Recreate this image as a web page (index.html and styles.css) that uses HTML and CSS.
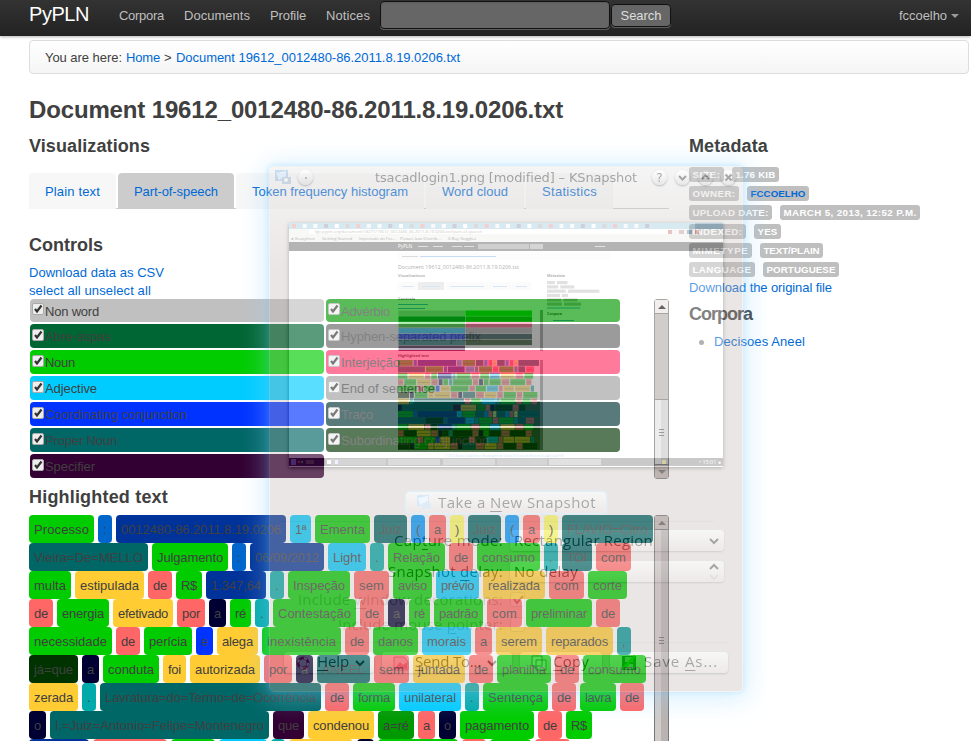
FILE: index.html
```html
<!DOCTYPE html>
<html lang="en">
<head>
<meta charset="utf-8">
<title>PyPLN</title>
<link rel="stylesheet" href="styles.css">
</head>
<body>
<header class="navbar">
  <span class="brand" data-w="60">PyPLN</span>
  <nav class="menu">
    <span data-w="45">Corpora</span><span data-w="66">Documents</span><span data-w="36">Profile</span><span data-w="44">Notices</span>
  </nav>
  <div class="search-input"></div>
  <div class="search-button"><span data-w="41">Search</span></div>
  <div class="user"><span data-w="48">fccoelho</span><i class="caret"></i></div>
</header>
<div class="breadcrumb"><span data-w="77">You are here:</span><a data-w="34">Home</a><span data-w="8">&gt;</span><a data-w="284">Document 19612_0012480-86.2011.8.19.0206.txt</a></div>
<h1><span data-w="534">Document 19612_0012480-86.2011.8.19.0206.txt</span></h1>
<div class="columns">
  <main>
    <h2><span data-w="121">Visualizations</span></h2>
    <div class="tabs">
      <a class="tab t1"><span data-w="55">Plain text</span></a>
      <a class="tab t2 active"><span data-w="84">Part-of-speech</span></a>
      <a class="tab t3"><span data-w="156">Token frequency histogram</span></a>
      <a class="tab t4"><span data-w="66">Word cloud</span></a>
      <a class="tab t5"><span data-w="55">Statistics</span></a>
    </div>
    <h2 class="controls-title"><span data-w="74">Controls</span></h2>
    <div class="link-line lowered"><a data-w="135">Download data as CSV</a></div>
    <div class="link-line lowered"><a data-w="122">select all unselect all</a></div>
    <div class="controls">
      <div class="control-grid" id="controls"></div>
      <div class="scroll first"><i class="up"></i><i class="track"></i><i class="thumb"></i><i class="down"></i></div>
    </div>
    <h2 class="text-title"><span data-w="139">Highlighted text</span></h2>
    <div class="highlight">
      <div id="words" class="words"></div>
      <div class="scroll second"><i class="up"></i><i class="thumb"></i></div>
    </div>
  </main>
  <aside>
    <h2><span data-w="79">Metadata</span></h2>
    <div class="meta" id="meta"></div>
    <div class="link-line"><a data-w="143">Download the original file</a></div>
    <h2 class="corpora"><span data-w="63">Corpora</span></h2>
    <div class="corpus"><i class="bullet"></i><a data-w="91">Decisoes Aneel</a></div>
  </aside>
</div>

<section class="window">
  <div class="titlebar">
    <svg class="appicon" width="16" height="15"><rect width="13" height="11" fill="#6d9cd2"/><path d="M1 3L11 1V6L4 10Z" fill="#bad6f4"/><rect x="7" y="7" width="9" height="7" fill="#7994b8"/><circle cx="11" cy="10" r="2" fill="#d9e7f7"/></svg>
    <i class="round"><b></b></i>
    <span class="title"><span data-w="262">tsacadlogin1.png [modified] – KSnapshot</span></span>
    <i class="round help">?</i>
    <i class="round"><svg width="15" height="15"><path d="M4 6L7.5 9.5L11 6"/></svg></i>
    <i class="round"><svg width="15" height="15"><path d="M4 9L7.5 5.5L11 9"/></svg></i>
    <i class="round"><svg width="15" height="15"><path d="M4.5 4.5L10.5 10.5M10.5 4.5L4.5 10.5"/></svg></i>
  </div>
  <svg class="preview" id="preview" width="434" height="244" viewBox="289 224 434 244"></svg>
  <div class="btn take">
    <svg width="16" height="15"><rect x="1" width="12" height="11" fill="#8fc0ee"/><path d="M2 3L12 1V6L4 10Z" fill="#d5e9fc"/><path d="M6 8h9v6H6z" fill="#a3c8ea"/></svg>
    <span data-w="158">Take a <u>N</u>ew Snapshot</span></div>
  <div class="divider"></div>
  <div class="form">
    <div class="row"><label><span data-w="109">Cap<u>t</u>ure mode:</span></label><div class="combo"><span data-w="139">Rectangular Region</span><svg width="12" height="8"><path d="M2 2L6 6L10 2"/></svg></div></div>
    <div class="row"><label><span data-w="115">Snapshot <u>d</u>elay:</span></label><div class="combo spin"><span data-w="64">No delay</span><svg width="12" height="18"><path d="M2 6L6 2L10 6"/><path class="pale" d="M2 12L6 16L10 12"/></svg></div></div>
    <div class="row faint"><label><span data-w="205">Include <u>w</u>indow decorations:</span></label><div class="check"><svg width="14" height="14"><path d="M3 6L6 10L12 3"/></svg></div></div>
    <div class="row faint"><label><span data-w="165">Include mouse <u>p</u>ointer:</span></label><div class="check"></div></div>
  </div>
  <div class="divider lower"></div>
  <div class="actions">
    <div class="btn b1"><svg width="16" height="16"><circle cx="8" cy="8" r="5" fill="none" stroke="#b22c50" stroke-width="3"/><circle cx="8" cy="8" r="5" fill="none" stroke="#eee" stroke-width="2" stroke-dasharray="3 5"/></svg><span data-w="32"><u>H</u>elp</span><svg class="arrow" width="10" height="8"><path d="M1 2L5 6L9 2"/></svg></div>
    <div class="btn b2"><svg width="16" height="16"><path d="M1 2h10l4 5v8H1z" fill="#d9b7cc" stroke="#a94f68"/><path d="M1 14L7 7L10 10L14 7V14Z" fill="#c54368"/></svg><span data-w="66"><u>S</u>end To...</span><svg class="arrow" width="10" height="8"><path d="M1 2L5 6L9 2"/></svg></div>
    <div class="btn b3"><svg width="16" height="16"><path d="M1 1h10v10H1zM5 5h10v10H5z" fill="#eee" stroke="#555"/></svg><span data-w="36"><u>C</u>opy</span></div>
    <div class="btn b4"><svg width="16" height="16"><rect x="1" y="1" width="14" height="14" fill="#064e20"/><path d="M4 2h8v5H4zM4 9h8v5H4z" fill="#8aa08e"/><path d="M2 14L14 1" stroke="#0a0" stroke-width="3"/></svg><span data-w="74">Save <u>A</u>s...</span></div>
  </div>
</section>
<script src="app.js"></script>
</body>
</html>
```
FILE: styles.css
```css
* { box-sizing: border-box; }
html { overflow: hidden; }
body { margin: 0; width: 971px; height: 741px; overflow: hidden; position: relative; background: #fff; color: #404040; font: 13px/18px "Liberation Sans", Arial, sans-serif; }
a { color: #0069d6; }
i { font-style: normal; }
[data-w] { display: inline-block; white-space: pre; }
u { text-underline-offset: 3px; text-decoration-thickness: 1px; }

.navbar { height: 36px; display: flex; background: linear-gradient(#333, #222); box-shadow: 0 1px 3px rgba(0,0,0,.3); color: #bfbfbf; padding-left: 29px; }
.brand { color: #fff; font-size: 20px; line-height: 29px; width: 90px; }
.menu { display: flex; gap: 20px; line-height: 32px; width: 261px; }
.search-input { width: 230px; height: 28px; margin-top: 1px; background: #666; border: 1px solid #111; border-radius: 4px; box-shadow: inset 0 1px 2px rgba(0,0,0,.1), 0 1px 0 rgba(255,255,255,.25); }
.search-button { margin: 4px 0 0 1px; width: 60px; height: 23px; background: #666; border: 1px solid #111; border-radius: 4px; line-height: 22px; text-align: center; color: #ddd; box-shadow: 0 1px 0 rgba(255,255,255,.25); }
.user { margin-left: auto; padding-right: 12px; line-height: 32px; display: flex; }
.caret { border: 4px solid transparent; border-top-color: #999; border-bottom: 0; height: 4px; margin: 14px 0 0 4px; }

.breadcrumb { margin: 4px 2px 0 29px; height: 34px; border: 1px solid #ddd; border-radius: 4px; background: linear-gradient(#fff, #f5f5f5); padding: 8px 15px; display: flex; gap: 4px; line-height: 17px; }
h1 { margin: 18px 0 0 29px; font-size: 24px; line-height: 36px; }
h2 { margin: 0; font-size: 18px; line-height: 36px; height: 36px; }
.columns { display: flex; margin-left: 29px; }
main { width: 640px; margin-right: 20px; }
.tabs { display: flex; gap: 2px; height: 36px; margin-top: 9px; background: linear-gradient(#ccc, #ccc) left bottom / 640px 1px no-repeat; }
.tab { background: #f7f7f7; border-radius: 4px 4px 0 0; text-align: center; line-height: 37px; }
.tab.active { background: #ccc; }
.t1 { width: 87px; } .t2 { width: 116px; } .t3 { width: 188px; } .t4 { width: 98px; } .t5 { width: 87px; }
.controls-title { margin-top: 18px; }
.link-line { height: 18px; }
.lowered { line-height: 20px; }
.controls, .highlight { display: flex; justify-content: space-between; }
.controls { height: 180px; }
.control-grid { display: grid; grid-template-columns: 294px 294px; grid-template-rows: 23px; grid-auto-rows: 24px; gap: 2px; margin-left: 1px; }
.control { border-radius: 4px; display: flex; line-height: 26px; padding-left: 2px; }
.control svg { margin: 5px 1px 0 0; }
.control:nth-child(-n+2) { line-height: 25px; }
.control:nth-child(-n+2) svg { margin-top: 4px; }
.text-title { margin-top: 0; }
.highlight { height: 230px; overflow: hidden; }
.words { display: flex; flex-direction: column; }
.word-row { display: flex; gap: 4px; height: 28px; }
.word { height: 28px; border-radius: 4px; line-height: 29px; padding-left: 5px; overflow: hidden; }
.scroll { width: 15px; border: 1px solid #777; border-radius: 3px; background: #c5c0be; display: flex; flex-direction: column; }
.first { height: 180px; margin-left: 34px; }
.second { height: 260px; }
.up, .down { height: 14px; background: #eae5e3; border-bottom: 1px solid #777; display: flex; justify-content: center; align-items: center; flex: none; }
.up::before, .down::before { content: ""; border: 4px solid transparent; border-bottom-color: #111; border-top: 0; }
.second .up { background: #c5bdbb; }
.second .up::before, .down::before { border-bottom-color: #666; }
.down { border: 0; border-top: 1px solid #777; background: #bcb2b0; }
.down::before { transform: rotate(180deg); }
.track { height: 86px; border-bottom: 1px solid #777; background: #b9b2af; }
.thumb { flex: 1; background: linear-gradient(90deg, #e4e1e0 50%, #ccc 50%); display: flex; align-items: center; justify-content: center; }
.second .thumb { background: linear-gradient(90deg, #d1cbca 50%, #b9b3b1 50%); padding-bottom: 24px; }
.thumb::before { content: ""; width: 5px; height: 7px; background: repeating-linear-gradient(#666 0 1px, transparent 1px 3px); }
.meta { display: flex; flex-direction: column; gap: 4px; margin: 3px 0 2px; }
.meta-row { display: flex; gap: 8px; height: 15px; }
.label { background: #bfbfbf; border-radius: 3px; color: #fff; font-weight: bold; font-size: 9.75px; line-height: 15px; text-align: center; }
.label.owner { color: #0069d6; }
.corpora { line-height: 34px; height: 34px; }
.corpus { display: flex; margin-top: 2px; }
.bullet { width: 5px; height: 5px; border-radius: 50%; background: #888; margin: 7px 10px 0 10px; }

.window { position: absolute; left: 269px; top: 166px; width: 474px; height: 526px; opacity: .35; border-radius: 5px; border: 1px solid #ddd; background: linear-gradient(#e2e1e0, #c3b8b5 100px); box-shadow: 0 0 5px 1px #68c4ff, 0 3px 26px 5px #94d4ff; color: #000; font: 15px/20px "Open Sans", "Noto Sans", sans-serif; }
.titlebar { height: 21px; display: flex; align-items: center; padding: 0 6px 0 5px; }
.appicon { margin-right: 7px; }
.round { width: 15px; height: 15px; border-radius: 50%; background: linear-gradient(#fff, #bbb); box-shadow: 0 1px 2px #333; margin-right: 8px; display: flex; align-items: center; justify-content: center; flex: none; }
.round:last-child { margin-right: 0; }
.round b { width: 2px; height: 2px; background: #555; }
.help { font: 12px "DejaVu Sans", sans-serif; }
.titlebar .title { flex: 1; padding-left: 54px; font: 13px/20px "DejaVu Sans", sans-serif; }
svg { display: block; flex: none; }
.round path, .combo path, .arrow path, .check path { fill: none; stroke: #000; stroke-width: 2; }
.combo .pale { stroke: #aaa; }
.preview { margin: 35px 0 0 19px; box-shadow: 0 1px 4px #222; background: #fff; }
.btn { height: 21px; border-radius: 4px; background: linear-gradient(#e9e7e6, #c9c1be); box-shadow: 0 1px 2px #666; display: flex; align-items: center; gap: 6px; padding-left: 11px; line-height: 19px; }
.take { width: 200px; padding-left: 10px; margin: 25px 0 0 136px; box-shadow: 0 0 2px 1px #a1dcff; }
.divider { height: 1px; margin: 8px 28px 8px 10px; background: #aaa; }
.form { height: 109px; }
.row { display: flex; height: 31px; gap: 7px; }
.row label { width: 233px; text-align: right; line-height: 20px; }
.combo { width: 214px; height: 21px; background: linear-gradient(#e8e6e5, #c9c1be); border-radius: 4px; box-shadow: 0 1px 2px #777; display: flex; align-items: center; justify-content: space-between; padding: 0 4px; line-height: 18px; }
.combo > span { margin-top: -2px; }
.row.faint { height: 25px; }
.faint label { line-height: 14px; }
.faint label span { opacity: .35; }
.check { width: 15px; height: 15px; border-radius: 3px; background: #cbc4c2; border: 1px solid #a89e9b; }
.check path { stroke: #844; }
.divider.lower { margin: 3px 14px 9px; }
.actions { display: flex; gap: 8px; margin-left: 14px; }
.actions .btn > span { margin-top: -2px; }
.b1 { width: 90px; } .b2 { width: 130px; } .b3 { width: 82px; } .b4 { width: 118px; }
.b4 { gap: 7px; }
```
FILE: app.js
```js
const C = { g: '#00cc00', b: '#0066cc', n: '#003399', c: '#00ccff', t: '#006666', p: '#0099ff', r: '#ff6666', y: '#ffff66', s: '#00aaaa', a: '#ffcc33', d: '#000033', e: '#0033ff', k: '#003300', u: '#330033', f: '#009900', m: '#009999' };

// One entry per word: text | category | width
const rows = [
  'Processo|g|65 :|b|14 0012480-86.2011.8.19.0206|n|170 1ª|c|21 Ementa|g|55 Juiz|t|33 (|p|14 a|r|17 )|y|14 Juiz|t|33 (|p|14 a|r|17 )|y|14 FLAVIO=Citro|t|91',
  'Vieira=De=MELLO|t|119 Julgamento|g|76 :|b|14 06/09/2012|n|74 Light|c|38 .|s|14 Relação|g|57 de|r|24 consumo|g|63 .|s|14 TOI|t|30 com|r|35',
  'multa|g|42 estipulada|a|69 de|r|24 R$|g|26 1.347,64|n|60 .|s|14 Inspeção|g|62 sem|r|35 aviso|g|39 prévio|c|43 realizada|a|62 com|r|35 corte|g|39',
  'de|r|24 energia|g|52 efetivado|a|60 por|r|28 a|d|17 ré|g|21 .|s|14 Contestação|g|83 de|r|24 a|d|17 ré|g|21 padrão|g|49 com|r|35 preliminar|g|66 de|r|24',
  'necessidade|g|83 de|r|24 perícia|g|48 e|e|17 alega|a|41 inexistência|g|79 de|r|24 danos|g|45 morais|c|49 a|r|17 serem|a|46 reparados|a|67 ,|m|14',
  'já=que|k|49 a|d|17 conduta|g|56 foi|a|23 autorizada|a|70 por|r|28 a|d|17 ANEEL|t|53 sem|r|35 juntada|a|52 de|r|24 planilha|g|54 de|r|24 consumo|g|63',
  'zerada|a|49 .|s|14 Lavratura=do=Termo=de=Ocorrência|t|221 de|r|24 forma|g|42 unilateral|c|62 .|s|14 Sentença|g|65 de|r|24 lavra|g|36 de|r|24',
  'o|d|17 I.=Juiz=Antonio=Felipe=Montenegro|t|219 que|u|31 condenou|a|66 a=ré|f|36 a|r|17 o|d|17 pagamento|g|74 de|r|24 R$|g|26',
  '|n|60 |r|74 |g|44 |c|48 |s|14 |a|64 |d|17 |g|80 |r|24 |g|41 |r|35'
].map(r => r.split(' ').map(w => w.split('|')));

document.getElementById('words').innerHTML = rows.map(r => '<div class="word-row">' + r.map(([t, c, w]) =>
  `<div class="word" style="width:${w}px;background:${C[c]}">${t ? `<span data-w="${w - 10}">${t}</span>` : ''}</div>`).join('') + '</div>').join('');

const controls = [
  ['Non word', '#c0c0c0', 54], ['Advérbio', '#009900', 49],
  ['Abre-aspas', '#006633', 66], ['Hyphen-separated prefix', '#666666', 140],
  ['Noun', '#00cc00', 30], ['Interjeição', '#ff3366', 59],
  ['Adjective', '#00ccff', 52], ['End of sentence', '#a0a0a0', 94],
  ['Coordinating conjunction', '#0033ff', 142], ['Traço', '#003333', 32],
  ['Proper Noun', '#006666', 72], ['Subordinating conjunction', '#003300', 148],
  ['Specifier', '#330033', 50]
];
document.getElementById('controls').innerHTML = controls.map(([t, c, w]) =>
  `<div class="control" style="background:${c}"><svg width="12" height="12"><rect x=".5" y=".5" width="11" height="11" rx="1.5" fill="#eee" stroke="#aaa"/><path d="M3 6L5 8.5L9.5 2.5" fill="none" stroke="#333" stroke-width="2.2"/></svg><span data-w="${w}">${t}</span></div>`).join('');

const meta = [['SIZE:', 35, '1.76 KIB', 47], ['OWNER:', 50, 'FCCOELHO', 62], ['UPLOAD DATE:', 83, 'MARCH 5, 2013, 12:52 P.M.', 140], ['INDEXED:', 57, 'YES', 27], ['MIMETYPE', 63, 'TEXT/PLAIN', 63], ['LANGUAGE', 66, 'PORTUGUESE', 76]];
document.getElementById('meta').innerHTML = meta.map(([a, aw, b, bw], i) =>
  `<div class="meta-row"><div class="label" style="width:${aw}px"><span data-w="${aw - 7}">${a}</span></div><div class="label${i === 1 ? ' owner' : ''}" style="width:${bw}px"><span data-w="${bw - 7}">${b}</span></div></div>`).join('');

// Window preview
const R = (x, y, w, h, f) => `<rect x="${x}" y="${y}" width="${w}" height="${h}" fill="${f}"/>`;
const T = (x, y, s, t, f, w) => `<text x="${x}" y="${y}" font-size="${s}" fill="${f}" textLength="${w}" lengthAdjust="spacingAndGlyphs">${t}</text>`;
let s = R(289, 224, 434, 244, '#fff') + R(289, 224, 434, 6, '#8ec0d8') + R(289, 230, 434, 13, '#eceae9') + R(309, 230, 360, 5, '#fff');
for (let i = 0; i < 34; i++) s += R(292 + i * 10.7, 225, 4, 4, ['#d77', '#eee', '#f4f4f4', '#779', '#fff', '#999'][i % 6]);
s += R(695, 224, 28, 6, '#357a9e') + R(668, 231, 4, 4, '#b55') + R(679, 231, 5, 4, '#b77') + R(687, 231, 5, 4, '#369') + R(695, 231, 4, 4, '#c44');
s += T(315, 234, 4, 'fgv.pypln.org/document/18271/19612_0012480_86.2011.8.19.0206.txt#part-of-speech', '#555', 167);
s += T(291, 241, 4, '● Grapython', '#222', 24) + T(322, 241, 4, 'Getting Started', '#222', 30) + T(359, 241, 4, 'Importado do Fire...', '#222', 37) + T(400, 241, 4, 'Power-law Distrib...', '#222', 41) + T(448, 241, 4, 'X-Ray Goggles', '#222', 28);
s += R(289, 243, 434, 9, '#2a2a2a') + T(398, 249, 5, 'PyPLN', '#fff', 14) + R(478, 245, 51, 5, '#777') + R(530, 245, 13, 5, '#888');
[418, 433, 452, 464, 595].forEach(x => s += R(x, 247, 10, 1, '#aaa'));
s += R(398, 253.5, 212, 7, '#f5f5f5') + R(402, 257, 16, 1, '#999') + R(420, 257, 76, 1, '#5b9be0');
s += T(398, 270, 5.5, 'Document 19612_0012480-86.2011.8.19.0206.txt', '#000', 121) + `<g font-weight="bold">` + T(398, 278, 4, 'Visualizations', '#222', 27) + T(547, 278, 4, 'Metadata', '#222', 18) + T(398, 301, 4, 'Controls', '#222', 17) + T(547, 316, 4, 'Corpora', '#222', 15) + T(398, 357.5, 4, 'Highlighted text', '#222', 31) + '</g>';
[[398, 20], [418, 26], [446, 42], [489, 22], [512, 19]].forEach(([x, w], i) => s += R(x, 283, w, 8, i === 1 ? '#ccc' : '#f4f4f4') + R(x + 4, 287, w - 8, 1, '#8bbbea'));
meta.forEach((m, i) => s += R(547, 282 + i * 4.3, m[1] * .226, 3.2, '#aaa') + R(549 + m[1] * .226, 282 + i * 4.3, m[3] * .226, 3.2, '#aaa'));
s += R(547, 308.5, 33, 1, '#398de0') + R(553, 321, 21, 1, '#398de0') + R(398, 305, 30, 1, '#398de0') + R(398, 309, 27, 1, '#398de0');
['#c0c0c0', '#0c0', '#063', '#090', '#0c0', '#f36', '#0cf', '#aaa', '#03f', '#033', '#066', '#030', '#303'].forEach((c, i) => s += R(i % 2 ? 465.5 : 398.5, 311.5 + (i >> 1) * 5.85, 66.5, 5.4, c));
s += R(540, 311, 3, 41, '#888') + R(540, 361, 3, 90, '#888');
// The lower half of the sample sits on a black base with darker terms
s += R(398, 402, 142, 49, '#3c5a3c');
for (let k = 0; k < 14; k++) {
  let x = 398;
  rows[k % 8].forEach(([t, c, w], j) => {
    if (k > 6 && c === 'g' && j % 2) c = 'k';
    const q = w * .226;
    if (x + q < 540) s += R(x.toFixed(1), (361 + k * 6.4).toFixed(1), q.toFixed(1), 5.9, C[c]) + R((x + 1).toFixed(1), 364 + k * 6.4, Math.max(1, q - 2).toFixed(1), .6, 'rgba(50,50,50,.6)');
    x += q + .9;
  });
}
s += T(445, 458, 3.5, '© 2012 Núcleo de Análise e Modelagem de Dados @ Escola de Matemática Aplicada/FGV', '#69a6df', 119);
s += R(289, 459, 434, 8, '#666') + R(289, 459, 36, 8, '#213') + R(330, 460, 56, 6, '#888') + R(388, 460, 52, 6, '#999') + R(443, 460, 52, 6, '#999') + R(497, 460, 50, 6, '#888') + R(549, 460, 52, 6, '#aaa') + R(327, 461, 4, 4, '#fff') + R(335, 461, 3, 4, '#cdf') + R(291, 460, 5, 6, '#77c') + R(298, 462, 2, 2, '#c33') + R(301, 462, 2, 2, '#3a5') + R(306, 461, 8, 4, '#555') + R(662, 461, 4, 4, '#dc5') + T(699, 465, 5, '• 15:01 ●', '#fff', 22);
document.getElementById('preview').innerHTML = s;

// Fit each text run to its designed width
document.querySelectorAll('[data-w]').forEach(el => {
  const r = document.createRange();
  r.selectNodeContents(el);
  const gap = el.dataset.w - r.getBoundingClientRect().width;
  el.style.letterSpacing = (gap / el.textContent.length).toFixed(3) + 'px';
});
```
